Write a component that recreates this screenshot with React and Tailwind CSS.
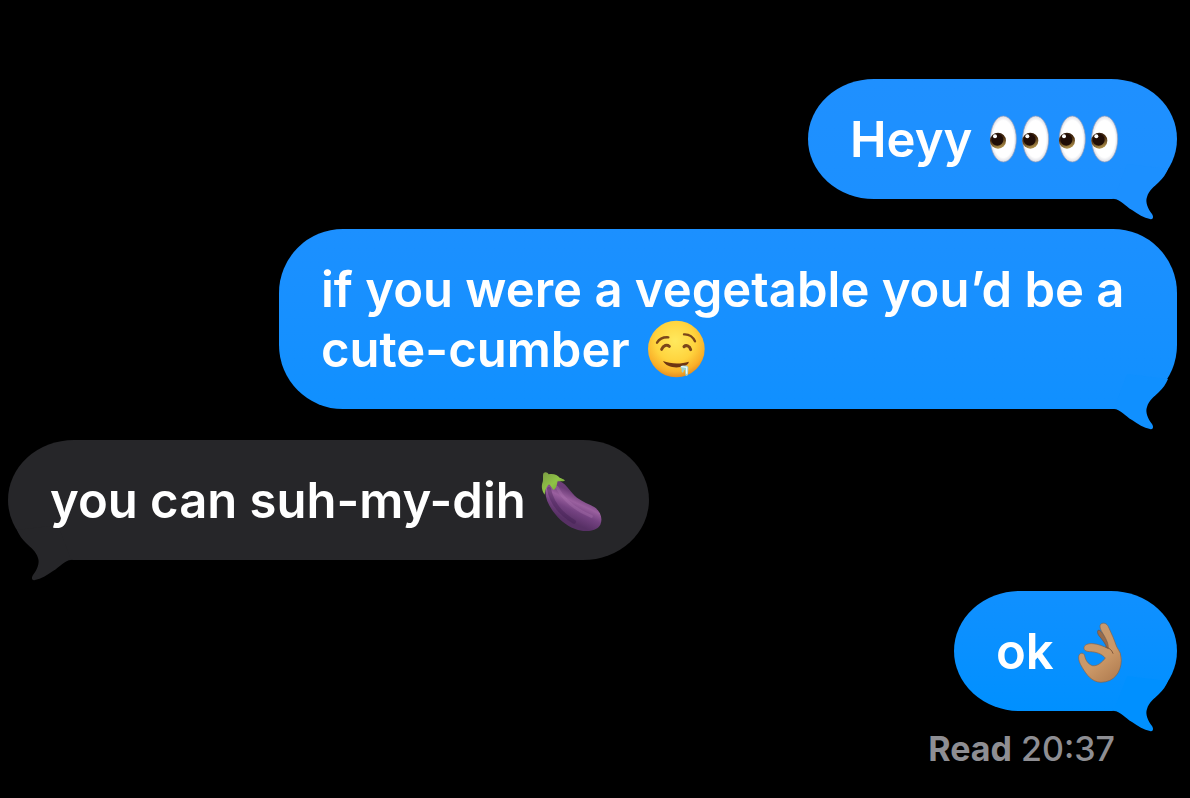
function Eyes() {
  return (
    <svg viewBox="18 12 207 180" role="img" aria-label="eyes" className="inline-block h-[60px] w-[69px] align-bottom">
      <defs>
        <radialGradient id="eyeWhite" cx="0.5" cy="0.5" r="0.5">
          <stop offset="0.8" stopColor="#ffffff" />
          <stop offset="1" stopColor="#dcdde4" />
        </radialGradient>
        <linearGradient id="iris" x1="0" y1="0" x2="0.3" y2="1">
          <stop offset="0" stopColor="#2a1608" />
          <stop offset="0.5" stopColor="#4b2e10" />
          <stop offset="1" stopColor="#a88a48" />
        </linearGradient>
      </defs>
      {[0, 97].map(x => (
        <g key={x} transform={`translate(${x} 0)`}>
          <ellipse cx="73" cy="99" rx="39" ry="69" fill="url(#eyeWhite)" stroke="#8f9cba" strokeWidth="2" />
          <circle cx="57" cy="104" r="24" fill="url(#iris)" />
          <circle cx="55" cy="101" r="18" fill="#200d06" />
          <circle cx="48" cy="91" r="6" fill="#ffffff" />
        </g>
      ))}
    </svg>
  )
}

function Drool() {
  return (
    <svg viewBox="15 27 207 180" role="img" aria-label="drooling face" className="inline-block h-[60px] w-[69px] align-bottom">
      <defs>
        <radialGradient id="face" cx="0.48" cy="0.36" r="0.64">
          <stop offset="0" stopColor="#ffe95e" />
          <stop offset="0.55" stopColor="#ffd43e" />
          <stop offset="0.85" stopColor="#f9af29" />
          <stop offset="1" stopColor="#e58d20" />
        </radialGradient>
      </defs>
      <circle cx="118" cy="114" r="85" fill="url(#face)" />
      <g fill="none" stroke="#7b461a" strokeLinecap="round">
        <path d="M60 95 C68 82 80 78 94 79" strokeWidth="7" />
        <path d="M141 70 C156 69 168 78 174 91" strokeWidth="7" />
        <path d="M74 115 C79 102 90 100 97 106" strokeWidth="9" />
        <path d="M141 107 C147 101 158 104 161 116" strokeWidth="9" />
      </g>
      <path d="M78 150 C100 159 132 160 155 152 C156 157 149 163 143 165 C118 174 88 169 78 150 Z" fill="#6e3512" />
      <path d="M130 167 C136 162 148 163 154 168 L153 190 C152 197 144 196 145 189 L144 178 C141 174 140 181 139 184 C135 187 133 181 134 176 Z" fill="#9ed0cb" />
      <path d="M134 167 L149 169 L149 187" fill="none" stroke="#e9fbff" strokeWidth="4" strokeLinecap="round" />
    </svg>
  )
}

function Eggplant() {
  return (
    <svg viewBox="30 30 207 180" role="img" aria-label="eggplant" className="inline-block h-[60px] w-[69px] align-bottom">
      <defs>
        <linearGradient id="skin" x1="0.62" y1="0.3" x2="0.38" y2="0.78">
          <stop offset="0" stopColor="#6d3d78" />
          <stop offset="0.3" stopColor="#9a609f" />
          <stop offset="0.6" stopColor="#744281" />
          <stop offset="1" stopColor="#573065" />
        </linearGradient>
        <linearGradient id="leaf" x1="0" y1="0" x2="1" y2="1">
          <stop offset="0" stopColor="#7b9b43" />
          <stop offset="0.5" stopColor="#8fc346" />
          <stop offset="1" stopColor="#5b862a" />
        </linearGradient>
      </defs>
      <path d="M54 76 C47 106 61 134 82 160 C100 182 122 199 150 207 C178 215 207 209 217 191 C225 174 218 151 200 139 C184 129 164 123 147 110 C128 96 118 71 96 61 C80 54 62 59 54 76 Z" fill="url(#skin)" />
      <path d="M63 84 C70 120 95 157 138 182" fill="none" stroke="#39194b" strokeWidth="12" strokeLinecap="round" opacity="0.35" />
      <path d="M87 79 C104 112 139 145 190 166" fill="none" stroke="#b47ab7" strokeWidth="9" strokeLinecap="round" opacity="0.3" />
      <path d="M47 36 C52 32 59 34 62 40 C76 37 89 42 95 50 C101 53 107 53 111 59 C103 62 96 60 89 61 C86 69 88 80 77 87 C71 82 69 75 63 70 C56 77 52 85 50 101 C42 90 39 76 44 63 C47 55 43 42 47 36 Z" fill="url(#leaf)" />
    </svg>
  )
}

function OkHand() {
  return (
    <svg viewBox="21 33 207 180" role="img" aria-label="ok hand" className="inline-block h-[60px] w-[69px] overflow-visible align-bottom">
      <defs>
        <linearGradient id="hand" x1="0.2" y1="0" x2="0.8" y2="1">
          <stop offset="0" stopColor="#c69a73" />
          <stop offset="0.6" stopColor="#cb9867" />
          <stop offset="1" stopColor="#b17d51" />
        </linearGradient>
      </defs>
      <path d="M117 58 C124 54 136 73 143 88 L153 114 L144 110 C138 96 128 84 119 73 C116 68 114 62 117 58 Z" fill="#986b4b" stroke="#72523f" strokeWidth="2" />
      <path d="M126 39 C134 33 144 38 148 47 L162 78 Q168 93 173 107 Q188 126 187 148 C186 185 165 213 126 214 C98 213 82 190 70 170 C62 157 58 147 59 137 C60 125 74 123 77 134 C80 148 86 158 100 164 C115 167 130 153 139 141 C128 128 112 123 95 122 C84 122 74 119 75 110 C76 101 88 97 102 98 C118 99 134 106 148 113 C149 95 138 78 129 63 C123 53 121 43 126 39 Z" fill="url(#hand)" stroke="#856248" strokeWidth="2" />
      <path d="M140 108 C151 111 158 116 162 127" fill="none" stroke="#82583c" strokeWidth="3" strokeLinecap="round" />
    </svg>
  )
}

function Tail({ className }) {
  return (
    <svg viewBox="0 0 70 60" fill="currentColor" aria-hidden="true" className={`absolute top-full -mt-[39px] h-[60px] w-[70px] ${className}`}>
      <path d="M7 39 C13 39 18 46 25 50 C31 54 37 58 43 59 C46 60 47 57 45 54 C41 49 38 42 40 37 C42 30 47 27 52 22 C56 18 59 14 61 9 L20 4 Z" />
    </svg>
  )
}

function Sent({ children, className, tail }) {
  return (
    <li className={`relative max-w-[898px] self-end bg-linear-to-b px-[42px] pt-[31px] pb-[29px] ${className}`}>
      <Tail className={`right-0 ${tail}`} />
      <p className="relative">{children}</p>
    </li>
  )
}

function Received({ children }) {
  return (
    <li className="relative my-px max-w-[898px] self-start rounded-[66px/60px] bg-[#262629] px-[42px] pt-[31px] pb-[29px]">
      <Tail className="left-0 -scale-x-100 text-[#262629]" />
      <p className="relative">{children}</p>
    </li>
  )
}

export default function App() {
  return (
    <main className="min-h-screen bg-black pt-[79px] pr-[13px] pl-2 font-['Inter',sans-serif] text-white">
      <ol className="flex flex-col gap-[30px] text-[49px] leading-[60px] font-semibold">
        <Sent className="rounded-[66px/60px] from-[#1f90ff] to-[#1c90ff]" tail="text-[#1c90ff]">
          Heyy <Eyes /><Eyes />&nbsp;
        </Sent>
        <Sent className="rounded-[64px] from-[#1c90ff] to-[#1090ff]" tail="text-[#1090ff]">
          if you were a vegetable you’d be a cute-cumber <Drool />
        </Sent>
        <Received>
          you can suh-my-dih <Eggplant />
        </Received>
        <Sent className="rounded-[66px/60px] from-[#1090ff] to-[#0090ff]" tail="text-[#0090ff]">
          ok <OkHand />
        </Sent>
      </ol>
      <p className="mt-5 pr-[62px] text-right text-[34px] leading-9 font-medium text-[#8e8e93]">
        <span className="font-bold">Read</span> 20:37
      </p>
    </main>
  )
}
